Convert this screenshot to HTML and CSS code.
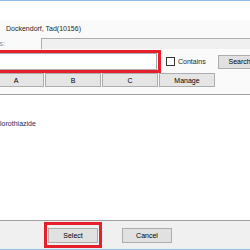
FILE: index.html
```html
<!DOCTYPE html>
<html lang="en">
<head>
    <meta charset="UTF-8">
    <meta name="viewport" content="width=device-width, initial-scale=1.0">
    <title>Select Drug</title>
    <link rel="stylesheet" href="styles.css">
</head>
<body>
    <div class="edge"></div>
    <div class="dialog">
        <div class="head"></div>
        <div class="form">
            <div class="row patient">
                <span class="value">Dockendorf, Tad(10156)</span>
            </div>
            <div class="row synonyms">
                <span class="label dim">Synonyms:</span>
                <div class="readonly-box"></div>
            </div>
            <div class="row find">
                <div class="mark">
                    <input type="text" class="search-input">
                </div>
                <label class="check"><span class="box"></span>Contains</label>
                <button class="btn search">Search</button>
            </div>
            <div class="row tabs">
                <button class="tab">A</button>
                <button class="tab">B</button>
                <button class="tab">C</button>
                <button class="tab">Manage</button>
            </div>
        </div>
        <div class="list">
            <div class="item">Hydrochlorothiazide</div>
        </div>
        <div class="foot">
            <div class="mark">
                <button class="btn">Select</button>
            </div>
            <button class="btn cancel">Cancel</button>
        </div>
    </div>
    <div class="edge"></div>
</body>
</html>
```

FILE: styles.css
```css
* {
    box-sizing: border-box;
}
body {
    margin: 0;
    width: 250px;
    height: 250px;
    overflow: hidden;
    font-family: "Liberation Sans", Arial, sans-serif;
    font-size: 7px;
    color: #1e1e1e;
    background-color: #fff;
}
.edge {
    height: 1px;
    background-color: #8cbde8;
}
.dialog {
    margin-left: -40px;
    width: 340px;
}
.head {
    height: 19px;
    background-color: #fff;
}
.form {
    background-color: #fafafa;
    padding-bottom: 7px;
    border-bottom: 1px solid #a0a0a0;
}
.row {
    display: flex;
    align-items: center;
}
.patient {
    height: 16px;
    padding-left: 46px;
}
.synonyms {
    height: 11px;
    margin-top: 2px;
}
.label {
    width: 45px;
    text-align: right;
}
.dim {
    color: #8a8a8a;
}
.readonly-box {
    margin-left: 36px;
    flex: 1;
    height: 11px;
    background-color: #f0f0f0;
    border-top: 1px solid #adadad;
    border-left: 1px solid #adadad;
}
.find {
    height: 23px;
    margin-top: 1px;
    padding-left: 20px;
}
.mark {
    border: 3px solid #e5202a;
}
.find .mark {
    padding-right: 1px;
}
.search-input {
    display: block;
    width: 174px;
    height: 17px;
    margin: 0;
    border: 1px solid #abadb3;
    background-color: #fff;
}
.check {
    display: flex;
    align-items: center;
    gap: 3px;
    margin-left: 5px;
}
.box {
    width: 9px;
    height: 9px;
    border: 1px solid #333;
    background-color: #fff;
}
.btn {
    font: inherit;
    color: #000;
    width: 50px;
    height: 15px;
    padding: 0;
    background-color: #e1e1e1;
    border: 1px solid #adadad;
}
.search {
    width: 44px;
    height: 14px;
    margin-left: 12px;
}
.tabs {
    height: 14px;
    padding-left: 28px;
    gap: 1px;
}
.tab {
    font: inherit;
    color: #000;
    width: 56px;
    height: 14px;
    padding: 0;
    background-color: #e5e5e5;
    border: 1px solid #adadad;
}
.list {
    height: 125px;
    padding: 24px 0 0 14px;
    background-color: #fff;
}
.item {
    line-height: 10px;
    color: #1a2a5a;
}
.foot {
    display: flex;
    align-items: flex-start;
    gap: 20px;
    height: 29px;
    padding: 1px 0 0 84px;
    border-top: 1px solid #a0a0a0;
    background-color: #f0f0f0;
}
.foot .mark {
    padding: 3px 1px 2px;
}
.cancel {
    margin-top: 6px;
}
```
